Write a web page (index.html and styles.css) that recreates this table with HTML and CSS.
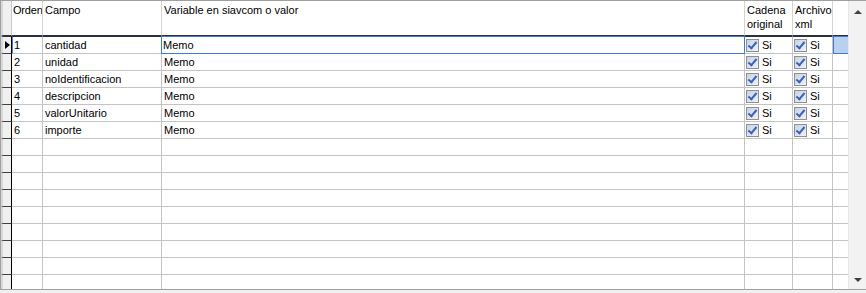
FILE: index.html
```html
<!DOCTYPE html>
<html lang="es">

<head>
    <meta charset="UTF-8">
    <title>Campos del comprobante</title>
    <link rel="stylesheet" href="styles.css">
</head>

<body>
    <div class="grid">
        <div class="table">
            <!-- Column headers -->
            <div class="row head">
                <div class="cell ind"></div>
                <div class="cell tight">Orden</div>
                <div class="cell">Campo</div>
                <div class="cell">Variable en siavcom o valor</div>
                <div class="cell">Cadena<br>original</div>
                <div class="cell">Archivo<br>xml</div>
                <div class="cell"></div>
            </div>

            <div class="row current">
                <div class="cell ind"><span class="arrow"></span></div>
                <div class="cell num">1</div>
                <div class="cell">cantidad</div>
                <div class="cell focus">Memo</div>
                <div class="cell chk"><span class="box"></span>Si</div>
                <div class="cell chk"><span class="box"></span>Si</div>
                <div class="cell sel"></div>
            </div>
            <div class="row">
                <div class="cell ind"></div>
                <div class="cell num">2</div>
                <div class="cell">unidad</div>
                <div class="cell">Memo</div>
                <div class="cell chk"><span class="box"></span>Si</div>
                <div class="cell chk"><span class="box"></span>Si</div>
                <div class="cell"></div>
            </div>
            <div class="row">
                <div class="cell ind"></div>
                <div class="cell num">3</div>
                <div class="cell">noIdentificacion</div>
                <div class="cell">Memo</div>
                <div class="cell chk"><span class="box"></span>Si</div>
                <div class="cell chk"><span class="box"></span>Si</div>
                <div class="cell"></div>
            </div>
            <div class="row">
                <div class="cell ind"></div>
                <div class="cell num">4</div>
                <div class="cell">descripcion</div>
                <div class="cell">Memo</div>
                <div class="cell chk"><span class="box"></span>Si</div>
                <div class="cell chk"><span class="box"></span>Si</div>
                <div class="cell"></div>
            </div>
            <div class="row">
                <div class="cell ind"></div>
                <div class="cell num">5</div>
                <div class="cell">valorUnitario</div>
                <div class="cell">Memo</div>
                <div class="cell chk"><span class="box"></span>Si</div>
                <div class="cell chk"><span class="box"></span>Si</div>
                <div class="cell"></div>
            </div>
            <div class="row">
                <div class="cell ind"></div>
                <div class="cell num">6</div>
                <div class="cell">importe</div>
                <div class="cell">Memo</div>
                <div class="cell chk"><span class="box"></span>Si</div>
                <div class="cell chk"><span class="box"></span>Si</div>
                <div class="cell"></div>
            </div>

            <!-- empty rows get filled in by the script below -->
            <div id="blankRows"></div>
        </div>

        <div class="vscroll">
            <span class="up"></span>
            <span class="down"></span>
        </div>
    </div>

    <script>
        // Fill the rest of the grid with blank rows
        const blankRows = document.getElementById('blankRows');
        for (let i = 0; i < 9; i++) {
            const row = document.createElement('div');
            row.className = 'row';
            for (let c = 0; c < 7; c++) {
                const cell = document.createElement('div');
                cell.className = c === 0 ? 'cell ind' : 'cell';
                row.appendChild(cell);
            }
            blankRows.appendChild(row);
        }
    </script>
</body>

</html>
```

FILE: styles.css
```css
/* General Styles */
body {
    margin: 0;
    padding: 0;
    background-color: #f0f0f0;
    font-family: "Liberation Sans", Arial, sans-serif;
    font-size: 11px;
    color: #000000;
}

.grid {
    display: flex;
    width: 866px;
    height: 290px;
    box-sizing: border-box;
    border: 1px solid #a0a0a0;
    border-right: none;
    background-color: #ffffff;
    overflow: hidden;
}

.table {
    width: 848px;
    overflow: hidden;
}

.row {
    display: grid;
    grid-template-columns: 11px 31px 119px 583px 48px 40px 16px;
    height: 17px;
}

.cell {
    box-sizing: border-box;
    border-right: 1px solid #c4c4c4;
    border-bottom: 1px solid #c4c4c4;
    padding: 1px 0 0 2px;
    line-height: 14px;
    white-space: nowrap;
    overflow: hidden;
    position: relative;
}

/* Record indicator column on the left */
.cell.ind {
    background-color: #f0f0f0;
    border-right: 1px solid #000000;
    border-bottom: 1px solid #404040;
    border-left: 2px solid #d8d8d8;
    padding: 0;
}

.arrow {
    position: absolute;
    left: 2px;
    top: 4px;
    width: 0;
    height: 0;
    border-top: 4px solid transparent;
    border-bottom: 4px solid transparent;
    border-left: 5px solid #000000;
}

/* Header row */
.head {
    height: 35px;
}

.head .cell {
    border-bottom: 1px solid #303030;
    border-right-color: #d4d4d4;
    padding-top: 2px;
    line-height: 14px;
    white-space: normal;
}

.head .cell.tight {
    padding-left: 1px;
    letter-spacing: -0.2px;
}

.head .cell.ind {
    border-right: 1px solid #c8c8c8;
    border-bottom: 1px solid #303030;
}

/* Current record */
.current {
    height: 18px;
}

.current .cell {
    border-top: 1px solid #1f2f50;
}

.current .cell.num {
    border-left: 1px solid #3d7cd6;
    padding-left: 1px;
}

.current .cell.ind {
    border-top: 1px solid #303030;
}

.current .cell.focus {
    border: 1px solid #3d7cd6;
    padding-left: 1px;
    margin-left: -1px;
}

.current .cell.sel {
    background-color: #b9d1ee;
    border: 1px solid #3d7cd6;
}

/* Logical columns drawn as checkboxes */
.cell.chk {
    display: flex;
    align-items: center;
    padding: 0 0 0 1px;
}

.box {
    width: 11px;
    height: 11px;
    margin-right: 3px;
    border: 1px solid #8c8f94;
    background: linear-gradient(135deg, #c9d3de 0%, #eef2f6 100%);
    position: relative;
}

.box::after {
    content: "";
    position: absolute;
    left: 3px;
    top: 0px;
    width: 3px;
    height: 7px;
    border-right: 2px solid #3b62b8;
    border-bottom: 2px solid #3b62b8;
    transform: rotate(40deg);
}

/* Vertical scrollbar */
.vscroll {
    width: 17px;
    flex: none;
    background-color: #f2f2f2;
    border-left: 1px solid #e6e6e6;
    position: relative;
}

.up,
.down {
    position: absolute;
    left: 5px;
    width: 0;
    height: 0;
    border-left: 4px solid transparent;
    border-right: 4px solid transparent;
}

.up {
    top: 9px;
    border-bottom: 4px solid #404040;
}

.down {
    bottom: 7px;
    border-top: 4px solid #404040;
}
```
